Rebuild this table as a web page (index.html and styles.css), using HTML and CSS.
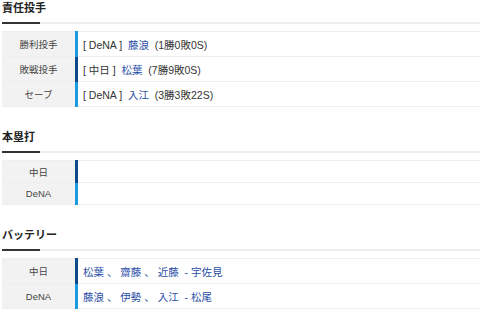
FILE: index.html
```html
<!DOCTYPE html>
<html lang="ja">
<head>
<meta charset="utf-8">
<link rel="stylesheet" href="styles.css">
</head>
<body>
<div class="wrap">
  <section class="sec">
    <h2 class="ttl">責任投手</h2>
    <table class="tbl">
      <tr><th>勝利投手</th><td class="db">[ DeNA ]&nbsp;&nbsp;<a class="lnk">藤浪</a>&nbsp;&nbsp;(1勝0敗0S)</td></tr>
      <tr><th>敗戦投手</th><td class="cd">[ 中日 ]&nbsp;&nbsp;<a class="lnk">松葉</a>&nbsp;&nbsp;(7勝9敗0S)</td></tr>
      <tr><th>セーブ</th><td class="db">[ DeNA ]&nbsp;&nbsp;<a class="lnk">入江</a>&nbsp;&nbsp;(3勝3敗22S)</td></tr>
    </table>
  </section>
  <section class="sec">
    <h2 class="ttl">本塁打</h2>
    <table class="tbl tbl-empty">
      <tr><th>中日</th><td class="cd"></td></tr>
      <tr><th>DeNA</th><td class="db"></td></tr>
    </table>
  </section>
  <section class="sec">
    <h2 class="ttl">バッテリー</h2>
    <table class="tbl">
      <tr><th>中日</th><td class="cd lnk">松葉 、 齋藤 、 近藤 &nbsp;- 宇佐見</td></tr>
      <tr><th>DeNA</th><td class="db lnk">藤浪 、 伊勢 、 入江 &nbsp;- 松尾</td></tr>
    </table>
  </section>
</div>
</body>
</html>
```

FILE: styles.css
```css
html, body {
  margin: 0;
  padding: 0;
  background: #fff;
}
body {
  font-family: "Liberation Sans", "Noto Sans CJK JP", sans-serif;
  color: #333;
}
.wrap {
  padding-left: 2px;
}
.sec + .sec {
  margin-top: 22px;
}
.ttl {
  position: relative;
  margin: 0;
  font-size: 11px;
  font-weight: bold;
  line-height: 16px;
  padding-bottom: 6px;
  border-bottom: 2px solid #eeeeee;
  color: #222;
}
.ttl::after {
  content: "";
  position: absolute;
  left: 0;
  bottom: -2px;
  width: 38px;
  height: 2px;
  background: #333;
}
.tbl {
  width: 100%;
  margin-top: 7px;
  border-collapse: collapse;
  border-top: 1px solid #eeeeee;
}
.tbl tr {
  border-bottom: 1px solid #eeeeee;
}
.tbl th {
  width: 73px;
  padding: 0;
  background: #f2f2f2;
  font-weight: normal;
  font-size: 9.5px;
  color: #444;
  text-align: center;
  height: 24px;
}
.tbl td {
  padding: 0 0 0 5px;
  font-size: 10.5px;
  color: #333;
  height: 24px;
  border-left: 3px solid #1a9ae0;
}
.tbl-empty th,
.tbl-empty td {
  height: 21px;
}
.tbl td.cd {
  border-left-color: #0c4a8a;
}
.tbl td.db {
  border-left-color: #1a9ae0;
}
.lnk,
.tbl td.lnk {
  color: #2a4fa6;
  text-decoration: none;
}
```
